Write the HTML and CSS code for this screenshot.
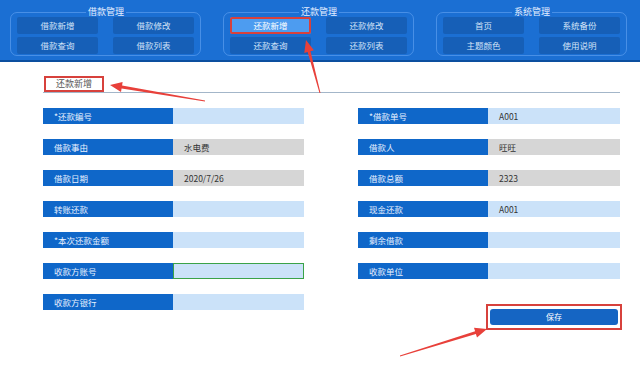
FILE: index.html
```html
<!DOCTYPE html>
<html lang="zh">
<head>
  <meta charset="UTF-8">
  <title>还款新增</title>
<link rel="stylesheet" href="styles.css">
</head>
<body>
  <div class="topbar">
    <fieldset class="group">
      <legend>借款管理</legend>
      <div class="btns">
        <a class="nav-btn">借款新增</a>
        <a class="nav-btn">借款修改</a>
        <a class="nav-btn">借款查询</a>
        <a class="nav-btn">借款列表</a>
      </div>
    </fieldset>
    <fieldset class="group">
      <legend>还款管理</legend>
      <div class="btns">
        <a class="nav-btn active">还款新增</a>
        <a class="nav-btn">还款修改</a>
        <a class="nav-btn">还款查询</a>
        <a class="nav-btn">还款列表</a>
      </div>
    </fieldset>
    <fieldset class="group">
      <legend>系统管理</legend>
      <div class="btns">
        <a class="nav-btn">首页</a>
        <a class="nav-btn">系统备份</a>
        <a class="nav-btn">主题颜色</a>
        <a class="nav-btn">使用说明</a>
      </div>
    </fieldset>
  </div>

  <div class="content">
    <div class="title-bar"><span class="page-title">还款新增</span></div>

    <div class="form">
      <div class="col">
        <div class="row"><span class="label">*还款编号</span><span class="value"></span></div>
        <div class="row"><span class="label">借款事由</span><span class="value readonly">水电费</span></div>
        <div class="row"><span class="label">借款日期</span><span class="value readonly">2020/7/26</span></div>
        <div class="row"><span class="label">转账还款</span><span class="value"></span></div>
        <div class="row"><span class="label">*本次还款金额</span><span class="value"></span></div>
        <div class="row"><span class="label">收款方账号</span><span class="value focus"></span></div>
        <div class="row"><span class="label">收款方银行</span><span class="value"></span></div>
      </div>
      <div class="col">
        <div class="row"><span class="label">*借款单号</span><span class="value">A001</span></div>
        <div class="row"><span class="label">借款人</span><span class="value readonly">旺旺</span></div>
        <div class="row"><span class="label">借款总额</span><span class="value readonly">2323</span></div>
        <div class="row"><span class="label">现金还款</span><span class="value">A001</span></div>
        <div class="row"><span class="label">剩余借款</span><span class="value"></span></div>
        <div class="row"><span class="label">收款单位</span><span class="value"></span></div>
        <div class="save-wrap"><button class="save-btn">保存</button></div>
      </div>
    </div>
  </div>

  <!-- 标注箭头 -->
  <svg class="marks" width="640" height="374" viewBox="0 0 640 374">
    <polygon points="205.1,100.5 122.1,85.5 122.6,82.1 110,85 121,91.9 121.6,88.5 204.9,101.5"/>
    <polygon points="320.5,92.9 310.5,51.2 313.9,50.3 306,40 304.3,52.9 307.6,52 319.5,93.1"/>
    <polygon points="400.1,356.5 475.9,334 477,337.4 487,329 474,327.8 475.1,331.2 399.9,355.5"/>
  </svg>
</body>
</html>
```

FILE: styles.css
```css
html, body {
  margin: 0;
  padding: 0;
  background: #fff;
  font-family: 'Noto Sans CJK SC', 'Noto Sans', sans-serif;
}

.topbar {
  height: 60px;
  background: #1b6fd3;
  border-bottom: 2px solid #0c4f9f;
  display: flex;
  gap: 22px;
  padding-left: 10px;
}

.group {
  width: 191px;
  box-sizing: border-box;
  margin: 7px 0 0 0;
  padding: 0 5px 1px 6px;
  height: 49px;
  border: 1px solid rgba(110, 170, 245, 0.55);
  border-radius: 7px;
}

.group legend {
  margin: 0 auto;
  padding: 0 2px;
  font-size: 9px;
  line-height: 10px;
  color: #e4eeff;
}

.btns {
  display: grid;
  grid-template-columns: 81px 81px;
  column-gap: 15px;
  row-gap: 3px;
}

.nav-btn {
  display: block;
  height: 17px;
  line-height: 17px;
  text-align: center;
  font-size: 8.5px;
  color: #d3e3f8;
  background: #165fb7;
  border-radius: 2px;
}

.nav-btn.active {
  background: #4d9cf0;
  color: #fff;
  box-shadow: inset 0 0 0 2px #d7413c;
}

.content {
  padding: 14px 20px 0 43px;
}

.title-bar {
  display: flex;
  width: 577px;
  height: 16px;
  border-bottom: 1px solid #a3b6c9;
}

.page-title {
  margin-left: 1px;
  padding: 0 10px;
  border: 2px solid #d7413c;
  font-size: 9px;
  line-height: 12px;
  color: #555;
}

.form {
  display: grid;
  grid-template-columns: 261px 262px;
  column-gap: 54px;
  margin-top: 15px;
}

.col {
  display: flex;
  flex-direction: column;
  gap: 15px;
}

.row {
  display: grid;
  grid-template-columns: 130px 1fr;
  height: 16px;
  font-size: 8.5px;
  line-height: 16px;
}

.label {
  background: #0f67c9;
  color: #e8f1ff;
  padding-left: 11px;
}

.value {
  background: #cbe2f9;
  color: #333;
  padding-left: 11px;
}

.value.readonly {
  background: #d6d6d6;
}

.value.focus {
  border: 1px solid #3aa348;
  box-sizing: border-box;
}

.save-wrap {
  margin: 10px 0 0 128px;
  width: 136px;
  box-sizing: border-box;
  padding: 3px 2px;
  border: 2px solid #d7413c;
}

.save-btn {
  display: block;
  width: 128px;
  height: 16px;
  padding: 0;
  border: none;
  border-radius: 3px;
  background: #1565c3;
  color: #fff;
  font-family: inherit;
  font-size: 8px;
  line-height: 16px;
}

.marks {
  position: absolute;
  top: 0;
  left: 0;
  pointer-events: none;
  fill: #e8403a;
}
```
